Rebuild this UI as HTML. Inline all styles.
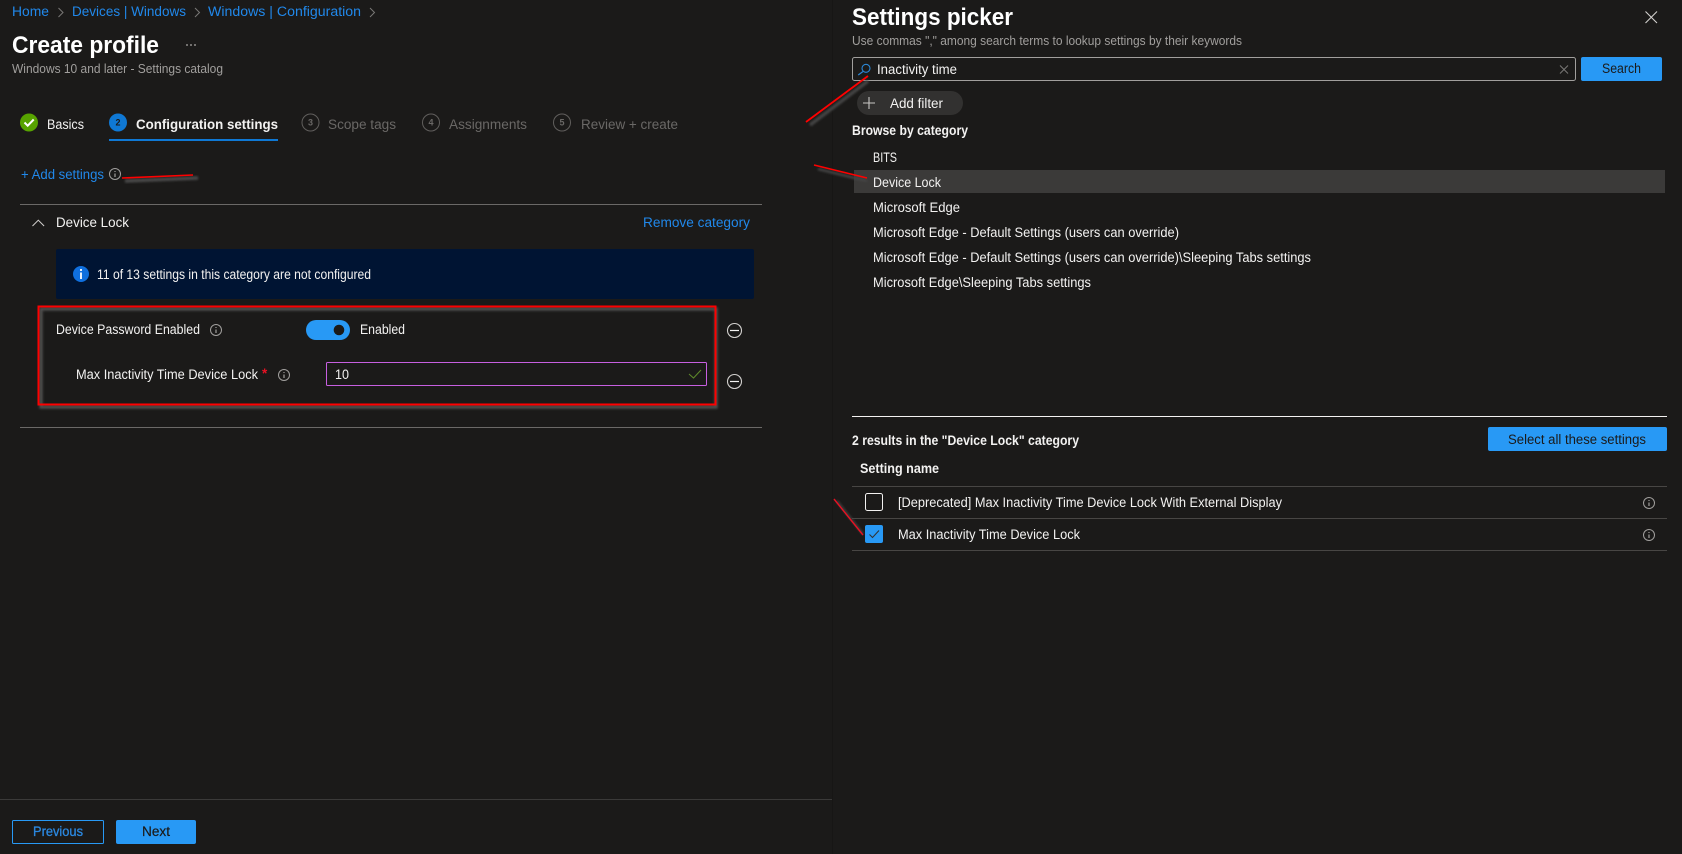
<!DOCTYPE html>
<html lang="en">
<head>
<meta charset="utf-8">
<title>Create profile</title>
<style>
html,body{margin:0;padding:0;background:#1b1a19;width:1682px;height:854px;overflow:hidden}
svg{display:block;position:absolute;left:0;top:0}
text{font-family:"Liberation Sans",sans-serif;font-size:13.5px;fill:#f3f2f1}
.link{fill:#2188ea}
.mut{fill:#a19f9d;font-size:12.5px}
.dis{fill:#6a6866}
.b{font-weight:bold}
.t{font-size:24px;font-weight:bold;fill:#fff}
.dark{fill:#1b1a19}
.n{font-size:9px;font-weight:bold;text-anchor:middle}
.ic{fill:none;stroke:#a19f9d;stroke-width:1}
</style>
</head>
<body>
<svg width="1682" height="854" viewBox="0 0 1682 854" xmlns="http://www.w3.org/2000/svg">
<defs>
<filter id="bl" x="-10%" y="-10%" width="120%" height="120%"><feGaussianBlur stdDeviation="1"/></filter>
<filter id="bl2" x="-20%" y="-100%" width="140%" height="300%" filterUnits="objectBoundingBox"><feGaussianBlur stdDeviation="1"/></filter>
<g id="info"><circle r="5.5" class="ic"/><path d="M0 -0.5V3M0 -3V-2" stroke="#a19f9d" stroke-width="1.2" fill="none"/></g>
</defs>
<rect width="1682" height="854" fill="#1b1a19"/>
<rect x="832" y="0" width="1" height="854" fill="#171615"/>

<!-- breadcrumb -->
<text class="link" x="12" y="16" textLength="37" lengthAdjust="spacingAndGlyphs">Home</text>
<path d="M58.500 8l4.500 4.500l-4.500 4.500" fill="none" stroke="#7a7876"/>
<text class="link" x="72" y="16" textLength="114" lengthAdjust="spacingAndGlyphs">Devices | Windows</text>
<path d="M195 8l4.500 4.500l-4.500 4.500" fill="none" stroke="#7a7876"/>
<text class="link" x="208" y="16" textLength="153" lengthAdjust="spacingAndGlyphs">Windows | Configuration</text>
<path d="M370 8l4.500 4.500l-4.500 4.500" fill="none" stroke="#7a7876"/>

<text class="t" x="12" y="53" textLength="147" lengthAdjust="spacingAndGlyphs">Create profile</text>
<path d="M186 45h2M190 45h2M194 45h2" stroke="#c8c6c4" stroke-width="1"/>
<text class="mut" x="12" y="73" textLength="211" lengthAdjust="spacingAndGlyphs">Windows 10 and later - Settings catalog</text>

<!-- steps -->
<circle cx="29" cy="122.500" r="9" fill="#57a300"/>
<path d="M24.500 122.500l3.200 3.200l6-6.200" fill="none" stroke="#fff" stroke-width="2"/>
<text x="47" y="129" textLength="37" lengthAdjust="spacingAndGlyphs">Basics</text>
<circle cx="118" cy="122.500" r="9" fill="#0f78d4"/>
<text class="n dark" x="118" y="125.500">2</text>
<text class="b" x="136" y="129" textLength="142" lengthAdjust="spacingAndGlyphs">Configuration settings</text>
<rect x="109" y="139" width="169" height="2" fill="#0f78d4"/>
<circle cx="310.500" cy="122.500" r="8.500" fill="none" stroke="#605e5c"/>
<text class="n dis" x="310.500" y="125.500">3</text>
<text class="dis" x="328" y="129" textLength="68" lengthAdjust="spacingAndGlyphs">Scope tags</text>
<circle cx="431" cy="122.500" r="8.500" fill="none" stroke="#605e5c"/>
<text class="n dis" x="431" y="125.500">4</text>
<text class="dis" x="449" y="129" textLength="78" lengthAdjust="spacingAndGlyphs">Assignments</text>
<circle cx="562" cy="122.500" r="8.500" fill="none" stroke="#605e5c"/>
<text class="n dis" x="562" y="125.500">5</text>
<text class="dis" x="581" y="129" textLength="97" lengthAdjust="spacingAndGlyphs">Review + create</text>

<!-- add settings -->
<text class="link" x="21" y="179" textLength="83" lengthAdjust="spacingAndGlyphs">+ Add settings</text>
<use href="#info" x="115" y="174"/>
<path d="M125 181L198 178" stroke="#4a4a4a" stroke-width="3.500" filter="url(#bl2)"/>
<path d="M122 178L193 175" stroke="#f00" stroke-width="1.600"/>

<!-- category -->
<rect x="20" y="204" width="742" height="1" fill="#6b6967"/>
<path d="M32.500 226l5.800-5.800l5.800 5.800" fill="none" stroke="#d2d0ce" stroke-width="1"/>
<text x="56" y="227" textLength="73" lengthAdjust="spacingAndGlyphs">Device Lock</text>
<text class="link" x="643" y="227" textLength="107" lengthAdjust="spacingAndGlyphs">Remove category</text>

<rect x="56" y="249" width="698" height="50" rx="2" fill="#001433"/>
<circle cx="81" cy="274" r="8" fill="#0f6fde"/>
<path d="M81 272.500V279M81 269v2" stroke="#fff" stroke-width="1.800"/>
<text x="97" y="279" textLength="274" lengthAdjust="spacingAndGlyphs">11 of 13 settings in this category are not configured</text>

<rect x="41" y="309" width="675" height="98" fill="none" stroke="#4d4d4d" stroke-width="3.500" filter="url(#bl)"/>
<rect x="38.500" y="306.500" width="677" height="98" fill="none" stroke="#f00" stroke-width="2"/>

<text x="56" y="334" textLength="144" lengthAdjust="spacingAndGlyphs">Device Password Enabled</text>
<use href="#info" x="216" y="330"/>
<rect x="306" y="320" width="44" height="20" rx="10" fill="#2899f5"/>
<circle cx="339" cy="330" r="5.300" fill="#1b1a19"/>
<text x="360" y="334" textLength="45" lengthAdjust="spacingAndGlyphs">Enabled</text>
<circle cx="734.500" cy="330.500" r="7" fill="none" stroke="#d2d0ce" stroke-width="1.100"/>
<path d="M730 330.500h9" stroke="#f3f2f1" stroke-width="1.200"/>

<text x="76" y="379" textLength="182" lengthAdjust="spacingAndGlyphs">Max Inactivity Time Device Lock</text>
<text x="262" y="378" style="fill:#e81123;font-weight:bold">*</text>
<use href="#info" x="284" y="375"/>
<rect x="326.500" y="362.500" width="380" height="23" rx="1" fill="none" stroke="#c75fe0"/>
<text x="335" y="379" textLength="14" lengthAdjust="spacingAndGlyphs">10</text>
<path d="M689 374l4.500 4l7.500-8" fill="none" stroke="#5f8a2a" stroke-width="1"/>
<circle cx="734.500" cy="381.500" r="7" fill="none" stroke="#d2d0ce" stroke-width="1.100"/>
<path d="M730 381.500h9" stroke="#f3f2f1" stroke-width="1.200"/>

<rect x="20" y="427" width="742" height="1" fill="#6b6967"/>

<!-- footer -->
<rect x="0" y="799" width="832" height="1" fill="#3b3a39"/>
<rect x="12.500" y="820.500" width="91" height="23" rx="1" fill="none" stroke="#2899f5"/>
<text x="33" y="836" style="fill:#2b88e0;stroke:#2b88e0;stroke-width:.3px" textLength="50" lengthAdjust="spacingAndGlyphs">Previous</text>
<rect x="116" y="820" width="80" height="24" rx="2" fill="#2899f5"/>
<text class="dark" x="142" y="836" style="stroke:#1b1a19;stroke-width:.2px" textLength="28" lengthAdjust="spacingAndGlyphs">Next</text>

<!-- settings picker -->
<text class="t" x="852" y="25" textLength="161" lengthAdjust="spacingAndGlyphs">Settings picker</text>
<text class="mut" x="852" y="45" textLength="390" lengthAdjust="spacingAndGlyphs">Use commas "," among search terms to lookup settings by their keywords</text>
<path d="M1645.500 11.500l11.500 11.500M1657 11.500l-11.500 11.500" stroke="#d2d0ce" stroke-width="1.100"/>

<rect x="852.500" y="57.500" width="723" height="23" rx="2" fill="none" stroke="#a19f9d"/>
<circle cx="866" cy="68.300" r="4" fill="none" stroke="#2b88d8" stroke-width="1.100"/>
<path d="M863 71.500l-4.800 3.500" stroke="#2b88d8" stroke-width="1.200"/>
<text x="877" y="74" textLength="80" lengthAdjust="spacingAndGlyphs">Inactivity time</text>
<path d="M1560 65.500l8 8M1568 65.500l-8 8" stroke="#7a7876"/>
<rect x="1581" y="57" width="81" height="24" rx="2" fill="#2899f5"/>
<text class="dark" x="1602" y="73" textLength="39" lengthAdjust="spacingAndGlyphs">Search</text>

<rect x="857" y="91" width="106" height="24" rx="12" fill="#323130"/>
<path d="M869 97v12M863 103h12" stroke="#c8c6c4" stroke-width="1.100"/>
<text x="890" y="108" textLength="53" lengthAdjust="spacingAndGlyphs">Add filter</text>
<text class="b" x="852" y="135" textLength="116" lengthAdjust="spacingAndGlyphs">Browse by category</text>

<rect x="854" y="170" width="811" height="23" fill="#3b3a39"/>
<text x="873" y="162" textLength="24" lengthAdjust="spacingAndGlyphs">BITS</text>
<text x="873" y="187" textLength="68" lengthAdjust="spacingAndGlyphs">Device Lock</text>
<text x="873" y="212" textLength="87" lengthAdjust="spacingAndGlyphs">Microsoft Edge</text>
<text x="873" y="237" textLength="306" lengthAdjust="spacingAndGlyphs">Microsoft Edge - Default Settings (users can override)</text>
<text x="873" y="262" textLength="438" lengthAdjust="spacingAndGlyphs">Microsoft Edge - Default Settings (users can override)\Sleeping Tabs settings</text>
<text x="873" y="287" textLength="218" lengthAdjust="spacingAndGlyphs">Microsoft Edge\Sleeping Tabs settings</text>

<rect x="852" y="416" width="815" height="1" fill="#f3f2f1"/>
<text class="b" x="852" y="445" textLength="227" lengthAdjust="spacingAndGlyphs">2 results in the "Device Lock" category</text>
<rect x="1488" y="427" width="179" height="24" rx="2" fill="#2899f5"/>
<text class="dark" x="1508" y="444" textLength="138" lengthAdjust="spacingAndGlyphs">Select all these settings</text>
<text class="b" x="860" y="473" textLength="79" lengthAdjust="spacingAndGlyphs">Setting name</text>
<rect x="852" y="486" width="815" height="1" fill="#484644"/>
<rect x="852" y="518" width="815" height="1" fill="#484644"/>
<rect x="852" y="550" width="815" height="1" fill="#484644"/>
<rect x="865.500" y="493.500" width="17" height="17" rx="2" fill="none" stroke="#f3f2f1"/>
<text x="898" y="507" textLength="384" lengthAdjust="spacingAndGlyphs">[Deprecated] Max Inactivity Time Device Lock With External Display</text>
<rect x="865" y="525" width="18" height="18" rx="2" fill="#2899f5"/>
<path d="M869.500 534.500l3 3l6.500-7" fill="none" stroke="#323130" stroke-width="1"/>
<text x="898" y="539" textLength="182" lengthAdjust="spacingAndGlyphs">Max Inactivity Time Device Lock</text>
<use href="#info" x="1649" y="503"/>
<use href="#info" x="1649" y="535"/>

<!-- annotation lines -->
<path d="M810 125L868 81" stroke="#444" stroke-width="3.500" filter="url(#bl)"/>
<path d="M806 122L868 76" stroke="#f00" stroke-width="1.800"/>
<path d="M818 169L867 181" stroke="#444" stroke-width="2.500" filter="url(#bl)"/>
<path d="M814 165L867 178" stroke="#f00" stroke-width="1.600"/>
<path d="M837 501L863 534" stroke="#444" stroke-width="2" filter="url(#bl)"/>
<path d="M834 499L863 535" stroke="#e81123" stroke-width="1.400"/>
</svg>
</body>
</html>
